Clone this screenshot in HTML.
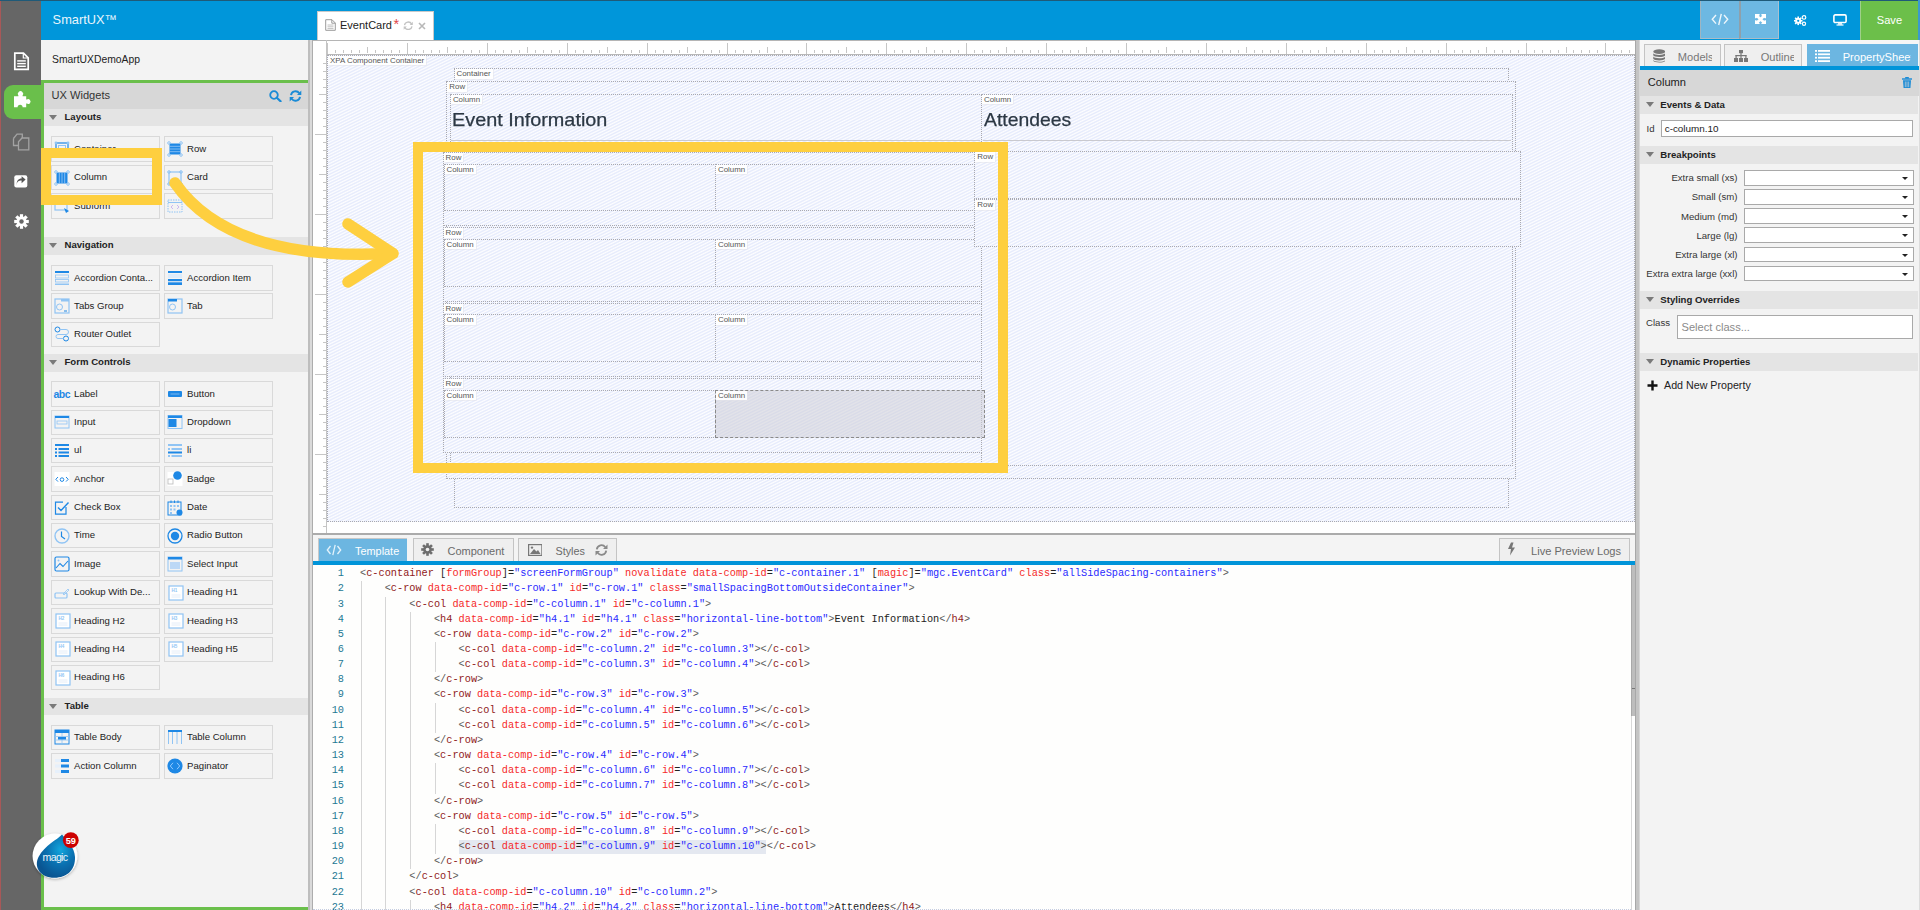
<!DOCTYPE html><html><head><meta charset="utf-8"><style>
*{margin:0;padding:0;box-sizing:border-box}
html,body{width:1920px;height:910px;overflow:hidden;background:#f3f3f3;font-family:"Liberation Sans",sans-serif;color:#333}
.a{position:absolute}
.t{position:absolute;white-space:pre;line-height:1}
.tile{position:absolute;height:25.4px;border:1px solid #d9d9d9;background:#f3f3f3}
.tile span{position:absolute;left:22.3px;top:6.4px;font-size:9.6px;color:#1c1c1c;white-space:pre;line-height:1}
.tile svg{position:absolute;left:2.3px;top:3.9px}
.sec{position:absolute;left:42px;width:266.5px;height:17.5px;background:#e4e4e4}
.sec b{position:absolute;left:22.5px;top:3.4px;font-size:9.6px;color:#222;line-height:1;white-space:pre}
.tri{position:absolute;left:7.2px;top:6px;width:0;height:0;border-left:4px solid transparent;border-right:4px solid transparent;border-top:5.7px solid #7a7a7a}
.psec{position:absolute;left:1640px;width:278px;height:17.5px;background:#e4e4e4}
.psec b{position:absolute;left:20.3px;top:4.2px;font-size:9.6px;color:#222;line-height:1;white-space:pre}
.psec .tri{left:6px}
.lbl{position:absolute;font-size:7.9px;color:#555;background:rgba(255,255,255,.92);padding:1px 2px 0.5px 2px;box-shadow:0.5px 0.5px 0 #e2e2e8;line-height:1;white-space:pre}
.dot{position:absolute;border:1px dotted #a0a0a0}
.code{position:absolute;left:360px;font-family:"Liberation Mono",monospace;font-size:10.27px;white-space:pre;line-height:15.16px;color:#000}
.ln{position:absolute;left:304px;width:40px;text-align:right;font-family:"Liberation Mono",monospace;font-size:10.27px;line-height:15.16px;color:#237893}
.g{position:absolute;width:1px;background:#d6d6d6}
.p{color:#5a5a5a}.tg{color:#902020}.at{color:#f52a2a}.v{color:#2a2aff}.k{color:#222}
.sel{position:absolute;left:1743.5px;width:170px;height:15.5px;background:#fff;border:1px solid #a9a9a9}
.sel:after{content:"";position:absolute;right:5px;top:6px;border-left:3px solid transparent;border-right:3px solid transparent;border-top:3px solid #222}
.blab{position:absolute;font-size:9.6px;color:#333;line-height:1;white-space:pre;text-align:right;width:120px;left:1617.5px}
.tab{position:absolute;background:#efefef;border:1px solid #c4c4c4;border-bottom:none}
.hatch{background-color:#fff;background-image:repeating-linear-gradient(154deg,#fdfdff 0px,#e7ecfc 1.1px,#e7ecfc 1.5px,#fdfdff 2.6px,#fdfdff 2.75px);background-attachment:fixed}
</style></head><body>
<div class="a" style="left:0px;top:0px;width:40.5px;height:910px;background:#666"></div>
<div class="a" style="left:0px;top:0px;width:1px;height:910px;background:#a85858"></div>
<svg class="a" style="left:13px;top:52px" width="17" height="19" viewBox="0 0 17 19">
<path d="M1.8 1.2 H10.5 L15.2 5.8 V17.3 H1.8 Z" fill="none" stroke="#fff" stroke-width="1.7"/>
<path d="M10.3 1.5 V6 H15" fill="none" stroke="#fff" stroke-width="1.2"/>
<rect x="4.2" y="8.2" width="8.6" height="1.4" fill="#fff"/><rect x="4.2" y="10.9" width="8.6" height="1.4" fill="#fff"/><rect x="4.2" y="13.6" width="8.6" height="1.4" fill="#fff"/>
</svg>
<div class="a" style="left:3.8px;top:84.7px;width:38px;height:34.3px;background:#6abf4b;border-radius:9px 0 0 9px"></div>
<svg class="a" style="left:13px;top:90px" width="20" height="19" viewBox="0 0 20 19">
<path d="M1 6.2 H5.4 V5.6 A2.7 2.7 0 1 1 9.6 5.6 V6.2 H13.2 V9.6 H13.8 A2.4 2.4 0 1 1 13.8 13.6 H13.2 V17.2 H9.6 A2.5 2.5 0 1 0 4.6 17.2 H1 Z" fill="#fff"/>
</svg>
<svg class="a" style="left:11.5px;top:132.5px" width="19" height="18" viewBox="0 0 19 18">
<path d="M1.5 5.5 L5 1.2 H10.3 V5 M1.5 5.5 V12.5 H6" fill="none" stroke="#a3a3a3" stroke-width="1.3"/>
<path d="M6.5 8.7 L10 5 H16.8 V16.8 H6.5 Z" fill="none" stroke="#a3a3a3" stroke-width="1.3"/>
</svg>
<svg class="a" style="left:13.8px;top:174.8px" width="14" height="13" viewBox="0 0 14 13">
<rect x="0.3" y="0.3" width="13" height="12.2" rx="2" fill="#fff"/>
<path d="M2.6 10.8 C2.6 6.6 4.8 5.6 7.6 5.6 V8.2 L11.6 4.6 L7.6 1.2 V3.4 C4.4 3.4 2.3 5.8 2.6 10.8 Z" fill="#555"/>
</svg>
<svg class="a" style="left:13.5px;top:213.8px" width="15" height="15" viewBox="-7.5 -7.5 15 15">
<g fill="#fff"><circle r="5"/><rect x="-1.6" y="-7.3" width="3.2" height="3.4" transform="rotate(0)"/><rect x="-1.6" y="-7.3" width="3.2" height="3.4" transform="rotate(45)"/><rect x="-1.6" y="-7.3" width="3.2" height="3.4" transform="rotate(90)"/><rect x="-1.6" y="-7.3" width="3.2" height="3.4" transform="rotate(135)"/><rect x="-1.6" y="-7.3" width="3.2" height="3.4" transform="rotate(180)"/><rect x="-1.6" y="-7.3" width="3.2" height="3.4" transform="rotate(225)"/><rect x="-1.6" y="-7.3" width="3.2" height="3.4" transform="rotate(270)"/><rect x="-1.6" y="-7.3" width="3.2" height="3.4" transform="rotate(315)"/></g><circle r="2.2" fill="#666"/>
</svg>
<div class="a" style="left:40.5px;top:0px;width:1879.5px;height:40px;background:#0096da"></div>
<div class="a" style="left:0px;top:0px;width:1920px;height:1px;background:#1f5a78"></div>
<div class="t" style="left:52.6px;top:14.00px;font-size:12.8px;color:#e9f5fc">SmartUX™</div>
<div class="a" style="left:317px;top:11.4px;width:116.6px;height:28.6px;background:#fff;border:1px solid #c9c9c9;border-bottom:none"></div>
<svg class="a" style="left:325px;top:19px" width="11" height="12" viewBox="0 0 11 12">
<path d="M0.7 0.7 H7 L10.3 4 V11.3 H0.7 Z M6.8 0.8 V4.2 H10.2" fill="none" stroke="#9a9a9a" stroke-width="1"/>
<path d="M2.5 6 H8.5 M2.5 7.8 H8.5 M2.5 9.6 H8.5" stroke="#b0b0b0" stroke-width="0.8"/>
</svg>
<div class="t" style="left:340px;top:20.00px;font-size:11px;color:#222">EventCard</div>
<div class="t" style="left:393.4px;top:17.00px;font-size:14.5px;color:#e04848">*</div>
<svg class="a" style="left:402.5px;top:20.5px" width="10.5" height="9.5" viewBox="0 0 10.5 9.5">
<path d="M1.5 4.2 A3.8 3.8 0 0 1 8.6 3 M9 5.3 A3.8 3.8 0 0 1 1.9 6.5" fill="none" stroke="#c2c2c2" stroke-width="1.3"/>
<path d="M9.8 0.8 V3.9 H6.7 Z M0.7 8.7 V5.6 H3.8 Z" fill="#c2c2c2"/>
</svg>
<svg class="a" style="left:417.5px;top:21.5px" width="8" height="8" viewBox="0 0 8 8">
<path d="M1 1 L7 7 M7 1 L1 7" stroke="#b8b8b8" stroke-width="1.6"/></svg>
<div class="a" style="left:1699.8px;top:1px;width:39.2px;height:38px;background:#6db8e2;border-left:1px solid #9fb5c2;border-bottom:1px solid #a8bcc8"></div>
<div class="a" style="left:1739px;top:1px;width:40.2px;height:38px;background:#6db8e2;border-left:2px solid #8fa0aa;border-right:1px solid #a8c0d0;border-bottom:1px solid #a8bcc8"></div>
<svg class="a" style="left:1711px;top:13px" width="18" height="13" viewBox="0 0 18 13">
<path d="M5 2 L1.3 6.3 L5 10.6 M13 2 L16.7 6.3 L13 10.6 M10.3 0.8 L7.7 12" fill="none" stroke="#eef7fc" stroke-width="1.4"/></svg>
<svg class="a" style="left:1754.5px;top:13.8px" width="11" height="10.5" viewBox="0 0 11 10.5">
<path d="M2 2 L9 8.5 M9 2 L2 8.5" stroke="#fff" stroke-width="2.8"/>
<g fill="#fff"><path d="M0 0 H4.6 L4.6 1.2 L1.2 4.3 H0 Z"/><path d="M11 0 V4.3 H9.8 L6.4 1.2 V0 Z"/><path d="M0 10.5 V6.2 H1.2 L4.6 9.3 V10.5 Z"/><path d="M11 10.5 H6.4 V9.3 L9.8 6.2 H11 Z"/></g></svg>
<svg class="a" style="left:1793.5px;top:14.5px" width="13" height="11" viewBox="0 0 13 11">
<g fill="#fff"><circle cx="4.2" cy="5.8" r="3"/><rect x="3.4" y="1.5" width="1.6" height="2" transform="rotate(0 4.2 5.8)"/><rect x="3.4" y="1.5" width="1.6" height="2" transform="rotate(45 4.2 5.8)"/><rect x="3.4" y="1.5" width="1.6" height="2" transform="rotate(90 4.2 5.8)"/><rect x="3.4" y="1.5" width="1.6" height="2" transform="rotate(135 4.2 5.8)"/><rect x="3.4" y="1.5" width="1.6" height="2" transform="rotate(180 4.2 5.8)"/><rect x="3.4" y="1.5" width="1.6" height="2" transform="rotate(225 4.2 5.8)"/><rect x="3.4" y="1.5" width="1.6" height="2" transform="rotate(270 4.2 5.8)"/><rect x="3.4" y="1.5" width="1.6" height="2" transform="rotate(315 4.2 5.8)"/></g>
<circle cx="4.2" cy="5.8" r="1.1" fill="#0096da"/>
<circle cx="10" cy="2.4" r="1.8" fill="none" stroke="#fff" stroke-width="1.2"/><circle cx="10" cy="8.8" r="1.6" fill="none" stroke="#fff" stroke-width="1.2"/>
</svg>
<svg class="a" style="left:1833px;top:14px" width="14" height="12" viewBox="0 0 14 12">
<rect x="0.9" y="0.9" width="12.2" height="7.6" rx="1.3" fill="none" stroke="#fff" stroke-width="1.6"/>
<rect x="5" y="9.2" width="4" height="1.4" fill="#fff"/><rect x="3.5" y="10.4" width="7" height="1.2" fill="#fff"/></svg>
<div class="a" style="left:1859.5px;top:1px;width:58.5px;height:38.5px;background:#6cbf4a;border-left:1px solid #9fd08a"></div>
<div class="t" style="left:1876.8px;top:15.00px;font-size:11.1px;color:#fff">Save</div>
<div class="a" style="left:1918px;top:0px;width:2px;height:40px;background:#3a9ad0"></div>
<div class="a" style="left:40.5px;top:40px;width:268px;height:870px;background:#f3f3f3"></div>
<div class="t" style="left:52px;top:55.00px;font-size:10.35px;color:#222">SmartUXDemoApp</div>
<div class="a" style="left:42px;top:82px;width:266.5px;height:26.5px;background:#d7d7d7"></div>
<div class="t" style="left:51.5px;top:90.00px;font-size:11.1px;color:#333">UX Widgets</div>
<svg class="a" style="left:268.5px;top:89.5px" width="13" height="12" viewBox="0 0 13 12">
<circle cx="5" cy="5" r="3.8" fill="none" stroke="#1a8bd6" stroke-width="1.8"/><path d="M7.8 7.8 L11.6 11.3" stroke="#1a8bd6" stroke-width="2.2" stroke-linecap="round"/></svg>
<svg class="a" style="left:288.5px;top:89.5px" width="13" height="12" viewBox="0 0 13 12">
<path d="M2 5.2 A4.6 4.6 0 0 1 10.3 3.2 M11 6.8 A4.6 4.6 0 0 1 2.7 8.8" fill="none" stroke="#1a8bd6" stroke-width="1.9"/>
<path d="M12.3 0.6 V4.9 H8 Z M0.7 11.4 V7.1 H5 Z" fill="#1a8bd6"/></svg>
<div class="sec" style="top:108.5px"><div class="tri"></div><b>Layouts</b></div>
<div class="tile" style="left:50.8px;top:136.3px;width:109.7px"><svg width="16" height="16" viewBox="0 0 16 16"><rect x="2" y="2" width="12" height="12" fill="none" stroke="#1e88e5" stroke-width="1.2"/><rect x="4.5" y="4.5" width="7" height="7" fill="none" stroke="#90c4f4" stroke-width="1"/><g fill="#90c4f4"><circle cx="2" cy="2" r="1.4"/><circle cx="14" cy="2" r="1.4"/><circle cx="2" cy="14" r="1.4"/><circle cx="14" cy="14" r="1.4"/></g></svg><span>Container</span></div>
<div class="tile" style="left:163.8px;top:136.3px;width:109.2px"><svg width="16" height="16" viewBox="0 0 16 16"><rect x="2.5" y="2.5" width="11" height="11" fill="#1e88e5"/><g stroke="#9ccaf5" stroke-width="0.8"><path d="M2.5 5.3 H13.5 M2.5 8 H13.5 M2.5 10.7 H13.5"/></g><g fill="none" stroke="#90c4f4" stroke-width="1"><circle cx="2" cy="2" r="1.3"/><circle cx="14" cy="2" r="1.3"/><circle cx="2" cy="14" r="1.3"/><circle cx="14" cy="14" r="1.3"/></g></svg><span>Row</span></div>
<div class="tile" style="left:50.8px;top:164.75px;width:109.7px"><svg width="16" height="16" viewBox="0 0 16 16"><rect x="2.5" y="2.5" width="11" height="11" fill="#1e88e5"/><g stroke="#9ccaf5" stroke-width="0.8"><path d="M5.3 2.5 V13.5 M8 2.5 V13.5 M10.7 2.5 V13.5"/></g><g fill="none" stroke="#90c4f4" stroke-width="1"><circle cx="2" cy="2" r="1.3"/><circle cx="14" cy="2" r="1.3"/><circle cx="2" cy="14" r="1.3"/><circle cx="14" cy="14" r="1.3"/></g></svg><span>Column</span></div>
<div class="tile" style="left:163.8px;top:164.75px;width:109.2px"><svg width="16" height="16" viewBox="0 0 16 16"><rect x="2" y="2" width="12" height="12" fill="none" stroke="#90c4f4" stroke-width="1.2"/><rect x="5" y="8" width="6" height="3" fill="#90c4f4"/><g fill="none" stroke="#90c4f4" stroke-width="1"><circle cx="2" cy="2" r="1.3"/><circle cx="14" cy="2" r="1.3"/><circle cx="2" cy="14" r="1.3"/><circle cx="14" cy="14" r="1.3"/></g></svg><span>Card</span></div>
<div class="tile" style="left:50.8px;top:193.2px;width:109.7px"><svg width="16" height="16" viewBox="0 0 16 16"><rect x="1" y="3" width="12" height="9" fill="none" stroke="#90c4f4" stroke-width="1.2"/><path d="M1 5.5 H13" stroke="#90c4f4"/><path d="M10 10 L15 13 L12 15 Z" fill="#1e88e5"/></svg><span>Subform</span></div>
<div class="tile" style="left:163.8px;top:193.2px;width:109.2px"><svg width="16" height="16" viewBox="0 0 16 16"><rect x="1" y="2" width="14" height="12" fill="none" stroke="#90c4f4" stroke-width="1" stroke-dasharray="1.5 1"/><path d="M1 4.5 H15" stroke="#90c4f4"/><path d="M6 7 L4 9 L6 11 M10 7 L12 9 L10 11" fill="none" stroke="#c0a8f0" stroke-width="0.8"/></svg></div>
<div class="sec" style="top:237px"><div class="tri"></div><b>Navigation</b></div>
<div class="tile" style="left:50.8px;top:265.2px;width:109.7px"><svg width="16" height="16" viewBox="0 0 16 16"><rect x="1" y="1" width="14" height="2" fill="#1e88e5"/><rect x="1.5" y="5" width="13" height="3" fill="none" stroke="#90c4f4" stroke-width="0.8"/><rect x="1.5" y="9.5" width="13" height="2.5" fill="none" stroke="#90c4f4" stroke-width="0.8"/><rect x="1" y="13.5" width="14" height="1.5" fill="#90c4f4"/></svg><span>Accordion Conta...</span></div>
<div class="tile" style="left:163.8px;top:265.2px;width:109.2px"><svg width="16" height="16" viewBox="0 0 16 16"><rect x="1" y="1" width="14" height="2" fill="#1e88e5"/><rect x="1" y="4" width="14" height="4" fill="#dcebfb"/><rect x="1" y="9" width="14" height="2.2" fill="#1e88e5"/><rect x="1" y="12.3" width="14" height="2.7" fill="#1e88e5"/></svg><span>Accordion Item</span></div>
<div class="tile" style="left:50.8px;top:293.4px;width:109.7px"><svg width="16" height="16" viewBox="0 0 16 16"><rect x="1" y="1" width="14" height="14" fill="none" stroke="#90c4f4" stroke-width="1.2"/><rect x="7" y="1" width="8" height="2.5" fill="#90c4f4"/><circle cx="5.5" cy="9" r="3" fill="none" stroke="#90c4f4"/><path d="M10 13 H13" stroke="#1e88e5"/></svg><span>Tabs Group</span></div>
<div class="tile" style="left:163.8px;top:293.4px;width:109.2px"><svg width="16" height="16" viewBox="0 0 16 16"><rect x="1" y="1" width="14" height="14" fill="none" stroke="#90c4f4" stroke-width="1.2"/><rect x="1" y="1" width="9" height="2.5" fill="#1e88e5"/><circle cx="5.5" cy="9" r="3" fill="none" stroke="#90c4f4"/></svg><span>Tab</span></div>
<div class="tile" style="left:50.8px;top:321.6px;width:109.7px"><svg width="16" height="16" viewBox="0 0 16 16"><circle cx="3.5" cy="3.5" r="2.5" fill="none" stroke="#1e88e5" stroke-width="1"/><circle cx="12" cy="12.5" r="2.5" fill="none" stroke="#1e88e5" stroke-width="1"/><path d="M6 3.5 H12 A2.5 2.5 0 0 1 12 8.5 H4 A2 2 0 0 0 4 12.5 H9.5" fill="none" stroke="#90c4f4" stroke-width="1"/></svg><span>Router Outlet</span></div>
<div class="sec" style="top:354px"><div class="tri"></div><b>Form Controls</b></div>
<div class="tile" style="left:50.8px;top:381.2px;width:109.7px"><div style="position:absolute;left:1.6px;top:6.6px;font:bold 10.5px 'Liberation Sans';color:#1e88e5;letter-spacing:-0.4px;line-height:1">abc</div><span>Label</span></div>
<div class="tile" style="left:163.8px;top:381.2px;width:109.2px"><svg width="16" height="16" viewBox="0 0 16 16"><rect x="1" y="5" width="14" height="6" rx="1" fill="#1e88e5"/><path d="M3.5 8 H12.5" stroke="#8fc3f2" stroke-width="0.8"/></svg><span>Button</span></div>
<div class="tile" style="left:50.8px;top:409.58px;width:109.7px"><svg width="16" height="16" viewBox="0 0 16 16"><rect x="1" y="2" width="14" height="12" fill="none" stroke="#90c4f4" stroke-width="1"/><rect x="1" y="2" width="14" height="2" fill="#1e88e5"/><rect x="3" y="7" width="10" height="3" fill="none" stroke="#90c4f4" stroke-width="0.8"/></svg><span>Input</span></div>
<div class="tile" style="left:163.8px;top:409.58px;width:109.2px"><svg width="16" height="16" viewBox="0 0 16 16"><rect x="1" y="1.5" width="14" height="13" fill="none" stroke="#90c4f4" stroke-width="1"/><rect x="1" y="1.5" width="14" height="2.5" fill="#1e88e5"/><rect x="1.5" y="5" width="8" height="8" fill="#1e88e5"/></svg><span>Dropdown</span></div>
<div class="tile" style="left:50.8px;top:437.96px;width:109.7px"><svg width="16" height="16" viewBox="0 0 16 16"><rect x="1" y="1" width="14" height="2" fill="#1e88e5"/><g fill="#1e88e5"><rect x="1" y="5" width="2" height="2"/><rect x="1" y="8.5" width="2" height="2"/><rect x="1" y="12" width="2" height="2"/><rect x="4.5" y="5" width="10.5" height="2"/><rect x="4.5" y="8.5" width="10.5" height="2"/><rect x="4.5" y="12" width="10.5" height="2"/></g></svg><span>ul</span></div>
<div class="tile" style="left:163.8px;top:437.96px;width:109.2px"><svg width="16" height="16" viewBox="0 0 16 16"><rect x="1" y="1" width="14" height="2" fill="#90c4f4"/><g fill="#90c4f4"><rect x="1" y="5" width="2" height="2"/><rect x="1" y="12" width="2" height="2"/><rect x="4.5" y="5" width="10.5" height="2"/><rect x="4.5" y="12" width="10.5" height="2"/></g><rect x="1" y="8.5" width="14" height="2" fill="#1e88e5"/></svg><span>li</span></div>
<div class="tile" style="left:50.8px;top:466.34px;width:109.7px"><svg width="16" height="16" viewBox="0 0 16 16"><rect x="0.5" y="1" width="15" height="14" fill="#fff"/><path d="M4 6 L1.8 8.3 L4 10.6 M12 6 L14.2 8.3 L12 10.6" fill="none" stroke="#1e88e5" stroke-width="1"/><circle cx="8" cy="8.6" r="1.8" fill="none" stroke="#1e88e5" stroke-width="1"/></svg><span>Anchor</span></div>
<div class="tile" style="left:163.8px;top:466.34px;width:109.2px"><svg width="16" height="16" viewBox="0 0 16 16"><rect x="0.5" y="1" width="15" height="14" fill="#fff"/><rect x="1" y="8" width="5" height="5" fill="none" stroke="#bbb" stroke-width="0.8"/><circle cx="10.5" cy="4.5" r="4.3" fill="#1e88e5"/></svg><span>Badge</span></div>
<div class="tile" style="left:50.8px;top:494.72px;width:109.7px"><svg width="16" height="16" viewBox="0 0 16 16"><path d="M12 7 V14.2 H1.5 V2.2 H9" fill="none" stroke="#1e88e5" stroke-width="1.2"/><path d="M4 7.5 L7 10.5 L14.5 2.5" fill="none" stroke="#1e88e5" stroke-width="1.4"/></svg><span>Check Box</span></div>
<div class="tile" style="left:163.8px;top:494.72px;width:109.2px"><svg width="16" height="16" viewBox="0 0 16 16"><rect x="1" y="2" width="13" height="13" fill="none" stroke="#1e88e5" stroke-width="1"/><g fill="#90c4f4"><rect x="3" y="5" width="2" height="2"/><rect x="6.5" y="5" width="2" height="2"/><rect x="10" y="5" width="2" height="2"/><rect x="3" y="8.5" width="2" height="2"/><rect x="6.5" y="8.5" width="2" height="2"/><rect x="3" y="12" width="2" height="2"/></g><circle cx="12.5" cy="12.5" r="3" fill="#1e88e5"/><g stroke="#1e88e5"><path d="M4 0.5 V3 M7.5 0.5 V3 M11 0.5 V3"/></g></svg><span>Date</span></div>
<div class="tile" style="left:50.8px;top:523.1px;width:109.7px"><svg width="16" height="16" viewBox="0 0 16 16"><circle cx="8" cy="8" r="7" fill="none" stroke="#90c4f4" stroke-width="1.4"/><path d="M7.5 3.5 V8.5 L11 11" fill="none" stroke="#1e88e5" stroke-width="1.2"/></svg><span>Time</span></div>
<div class="tile" style="left:163.8px;top:523.1px;width:109.2px"><svg width="16" height="16" viewBox="0 0 16 16"><circle cx="8" cy="8" r="7" fill="none" stroke="#1e88e5" stroke-width="1.3"/><circle cx="8" cy="8" r="4.2" fill="#1e88e5"/></svg><span>Radio Button</span></div>
<div class="tile" style="left:50.8px;top:551.48px;width:109.7px"><svg width="16" height="16" viewBox="0 0 16 16"><rect x="1" y="1" width="14" height="14" rx="1.5" fill="none" stroke="#1e88e5" stroke-width="1.2"/><path d="M2 12 L6 7.5 L9 10.5 L14 5" fill="none" stroke="#1e88e5" stroke-width="1.1"/><circle cx="4.5" cy="4.5" r="1" fill="#90c4f4"/></svg><span>Image</span></div>
<div class="tile" style="left:163.8px;top:551.48px;width:109.2px"><svg width="16" height="16" viewBox="0 0 16 16"><rect x="1" y="1" width="14" height="14" fill="none" stroke="#90c4f4" stroke-width="1"/><rect x="1" y="1" width="14" height="2.5" fill="#1e88e5"/><rect x="3" y="6" width="10" height="7" fill="#bcd8f6"/></svg><span>Select Input</span></div>
<div class="tile" style="left:50.8px;top:579.86px;width:109.7px"><svg width="16" height="16" viewBox="0 0 16 16"><rect x="1" y="8" width="12" height="5" rx="1" fill="none" stroke="#90c4f4" stroke-width="1.2"/><path d="M9 9 L14 4 L15 5 L10 10 Z" fill="none" stroke="#90c4f4" stroke-width="0.8"/></svg><span>Lookup With De...</span></div>
<div class="tile" style="left:163.8px;top:579.86px;width:109.2px"><svg width="16" height="16" viewBox="0 0 16 16" style="position:absolute;left:3px;top:3.7px"><rect x="1" y="1" width="14" height="14" fill="#fff" stroke="#90c4f4" stroke-width="1.2"/><text x="3.5" y="7" font-size="4.5" font-family="Liberation Sans" font-weight="bold" fill="#90c4f4">H1</text><path d="M3.5 10 H12.5 M3.5 12 H12.5" stroke="#dde9f6" stroke-width="0.8"/></svg><span>Heading H1</span></div>
<div class="tile" style="left:50.8px;top:608.24px;width:109.7px"><svg width="16" height="16" viewBox="0 0 16 16" style="position:absolute;left:3px;top:3.7px"><rect x="1" y="1" width="14" height="14" fill="#fff" stroke="#90c4f4" stroke-width="1.2"/><text x="3.5" y="7" font-size="4.5" font-family="Liberation Sans" font-weight="bold" fill="#90c4f4">H2</text><path d="M3.5 10 H12.5 M3.5 12 H12.5" stroke="#dde9f6" stroke-width="0.8"/></svg><span>Heading H2</span></div>
<div class="tile" style="left:163.8px;top:608.24px;width:109.2px"><svg width="16" height="16" viewBox="0 0 16 16" style="position:absolute;left:3px;top:3.7px"><rect x="1" y="1" width="14" height="14" fill="#fff" stroke="#90c4f4" stroke-width="1.2"/><text x="3.5" y="7" font-size="4.5" font-family="Liberation Sans" font-weight="bold" fill="#90c4f4">H3</text><path d="M3.5 10 H12.5 M3.5 12 H12.5" stroke="#dde9f6" stroke-width="0.8"/></svg><span>Heading H3</span></div>
<div class="tile" style="left:50.8px;top:636.62px;width:109.7px"><svg width="16" height="16" viewBox="0 0 16 16" style="position:absolute;left:3px;top:3.7px"><rect x="1" y="1" width="14" height="14" fill="#fff" stroke="#90c4f4" stroke-width="1.2"/><text x="3.5" y="7" font-size="4.5" font-family="Liberation Sans" font-weight="bold" fill="#90c4f4">H4</text><path d="M3.5 10 H12.5 M3.5 12 H12.5" stroke="#dde9f6" stroke-width="0.8"/></svg><span>Heading H4</span></div>
<div class="tile" style="left:163.8px;top:636.62px;width:109.2px"><svg width="16" height="16" viewBox="0 0 16 16" style="position:absolute;left:3px;top:3.7px"><rect x="1" y="1" width="14" height="14" fill="#fff" stroke="#90c4f4" stroke-width="1.2"/><text x="3.5" y="7" font-size="4.5" font-family="Liberation Sans" font-weight="bold" fill="#90c4f4">H5</text><path d="M3.5 10 H12.5 M3.5 12 H12.5" stroke="#dde9f6" stroke-width="0.8"/></svg><span>Heading H5</span></div>
<div class="tile" style="left:50.8px;top:665.0px;width:109.7px"><svg width="16" height="16" viewBox="0 0 16 16" style="position:absolute;left:3px;top:3.7px"><rect x="1" y="1" width="14" height="14" fill="#fff" stroke="#90c4f4" stroke-width="1.2"/><text x="3.5" y="7" font-size="4.5" font-family="Liberation Sans" font-weight="bold" fill="#90c4f4">H6</text><path d="M3.5 10 H12.5 M3.5 12 H12.5" stroke="#dde9f6" stroke-width="0.8"/></svg><span>Heading H6</span></div>
<div class="sec" style="top:697.7px"><div class="tri"></div><b>Table</b></div>
<div class="tile" style="left:50.8px;top:724.6px;width:109.7px"><svg width="16" height="16" viewBox="0 0 16 16"><rect x="1" y="1" width="14" height="14" fill="none" stroke="#1e88e5" stroke-width="1"/><rect x="1" y="1" width="14" height="3" fill="#1e88e5"/><path d="M1 7.5 H15 M1 11 H15 M8 4 V15" stroke="#90c4f4" stroke-width="0.8"/><rect x="4" y="8" width="8" height="2.5" fill="#1e88e5"/></svg><span>Table Body</span></div>
<div class="tile" style="left:163.8px;top:724.6px;width:109.2px"><svg width="16" height="16" viewBox="0 0 16 16"><rect x="1" y="1" width="14" height="2" fill="#1e88e5"/><path d="M1.5 3 V15 M5.5 3 V15 M10 3 V15 M14.5 3 V15" stroke="#90c4f4" stroke-width="1"/></svg><span>Table Column</span></div>
<div class="tile" style="left:50.8px;top:753.2px;width:109.7px"><svg width="16" height="16" viewBox="0 0 16 16"><g fill="#1e88e5"><rect x="7" y="1" width="8" height="3"/><rect x="7" y="6.5" width="8" height="3"/><rect x="7" y="12" width="8" height="3"/></g><g fill="#e6f0fb"><rect x="1" y="1" width="6" height="3"/><rect x="1" y="6.5" width="6" height="3"/><rect x="1" y="12" width="6" height="3"/></g></svg><span>Action Column</span></div>
<div class="tile" style="left:163.8px;top:753.2px;width:109.2px"><svg width="16" height="16" viewBox="0 0 16 16"><circle cx="8" cy="8" r="7.6" fill="#1e88e5"/><path d="M6 4.8 L3.3 8 L6 11.2 M10 4.8 L12.7 8 L10 11.2" fill="none" stroke="#9fd0ff" stroke-width="0.9"/></svg><span>Paginator</span></div>
<div class="a" style="left:40.5px;top:80px;width:268px;height:3px;background:#6abf4b"></div>
<div class="a" style="left:40.5px;top:80px;width:3px;height:830px;background:#6abf4b"></div>
<div class="a" style="left:40.5px;top:907px;width:268px;height:3px;background:#6abf4b"></div>
<div class="a" style="left:308.2px;top:40px;width:2px;height:870px;background:#bdbdbd"></div>
<div class="a" style="left:310.2px;top:40px;width:2px;height:870px;background:#dadada"></div>
<div class="a" style="left:312.2px;top:40px;width:1px;height:870px;background:#adadad"></div>
<div class="a" style="left:313.2px;top:40px;width:1321.6px;height:495px;background:#fff"></div>
<div class="a" style="left:313.2px;top:40px;width:1321.6px;height:1px;background:#b5b5b5"></div>
<div class="a" style="left:327px;top:53.5px;width:1307.5px;height:1px;background:#b8b8b8"></div>
<div class="a" style="left:326px;top:40px;width:1px;height:493px;background:#c4c4c4"></div>
<div class="a" style="left:327.0px;top:42.5px;width:1px;height:11px;background:#c6c6c6"></div><div class="a" style="left:335.0px;top:50.2px;width:1px;height:3.3px;background:#c6c6c6"></div><div class="a" style="left:343.0px;top:50.2px;width:1px;height:3.3px;background:#c6c6c6"></div><div class="a" style="left:351.0px;top:50.2px;width:1px;height:3.3px;background:#c6c6c6"></div><div class="a" style="left:359.0px;top:50.2px;width:1px;height:3.3px;background:#c6c6c6"></div><div class="a" style="left:367.0px;top:46.9px;width:1px;height:6.6px;background:#c6c6c6"></div><div class="a" style="left:374.9px;top:50.2px;width:1px;height:3.3px;background:#c6c6c6"></div><div class="a" style="left:382.9px;top:50.2px;width:1px;height:3.3px;background:#c6c6c6"></div><div class="a" style="left:390.9px;top:50.2px;width:1px;height:3.3px;background:#c6c6c6"></div><div class="a" style="left:398.9px;top:50.2px;width:1px;height:3.3px;background:#c6c6c6"></div><div class="a" style="left:406.9px;top:42.5px;width:1px;height:11px;background:#c6c6c6"></div><div class="a" style="left:414.9px;top:50.2px;width:1px;height:3.3px;background:#c6c6c6"></div><div class="a" style="left:422.9px;top:50.2px;width:1px;height:3.3px;background:#c6c6c6"></div><div class="a" style="left:430.9px;top:50.2px;width:1px;height:3.3px;background:#c6c6c6"></div><div class="a" style="left:438.9px;top:50.2px;width:1px;height:3.3px;background:#c6c6c6"></div><div class="a" style="left:446.9px;top:46.9px;width:1px;height:6.6px;background:#c6c6c6"></div><div class="a" style="left:454.8px;top:50.2px;width:1px;height:3.3px;background:#c6c6c6"></div><div class="a" style="left:462.8px;top:50.2px;width:1px;height:3.3px;background:#c6c6c6"></div><div class="a" style="left:470.8px;top:50.2px;width:1px;height:3.3px;background:#c6c6c6"></div><div class="a" style="left:478.8px;top:50.2px;width:1px;height:3.3px;background:#c6c6c6"></div><div class="a" style="left:486.8px;top:42.5px;width:1px;height:11px;background:#c6c6c6"></div><div class="a" style="left:494.8px;top:50.2px;width:1px;height:3.3px;background:#c6c6c6"></div><div class="a" style="left:502.8px;top:50.2px;width:1px;height:3.3px;background:#c6c6c6"></div><div class="a" style="left:510.8px;top:50.2px;width:1px;height:3.3px;background:#c6c6c6"></div><div class="a" style="left:518.8px;top:50.2px;width:1px;height:3.3px;background:#c6c6c6"></div><div class="a" style="left:526.8px;top:46.9px;width:1px;height:6.6px;background:#c6c6c6"></div><div class="a" style="left:534.7px;top:50.2px;width:1px;height:3.3px;background:#c6c6c6"></div><div class="a" style="left:542.7px;top:50.2px;width:1px;height:3.3px;background:#c6c6c6"></div><div class="a" style="left:550.7px;top:50.2px;width:1px;height:3.3px;background:#c6c6c6"></div><div class="a" style="left:558.7px;top:50.2px;width:1px;height:3.3px;background:#c6c6c6"></div><div class="a" style="left:566.7px;top:42.5px;width:1px;height:11px;background:#c6c6c6"></div><div class="a" style="left:574.7px;top:50.2px;width:1px;height:3.3px;background:#c6c6c6"></div><div class="a" style="left:582.7px;top:50.2px;width:1px;height:3.3px;background:#c6c6c6"></div><div class="a" style="left:590.7px;top:50.2px;width:1px;height:3.3px;background:#c6c6c6"></div><div class="a" style="left:598.7px;top:50.2px;width:1px;height:3.3px;background:#c6c6c6"></div><div class="a" style="left:606.7px;top:46.9px;width:1px;height:6.6px;background:#c6c6c6"></div><div class="a" style="left:614.6px;top:50.2px;width:1px;height:3.3px;background:#c6c6c6"></div><div class="a" style="left:622.6px;top:50.2px;width:1px;height:3.3px;background:#c6c6c6"></div><div class="a" style="left:630.6px;top:50.2px;width:1px;height:3.3px;background:#c6c6c6"></div><div class="a" style="left:638.6px;top:50.2px;width:1px;height:3.3px;background:#c6c6c6"></div><div class="a" style="left:646.6px;top:42.5px;width:1px;height:11px;background:#c6c6c6"></div><div class="a" style="left:654.6px;top:50.2px;width:1px;height:3.3px;background:#c6c6c6"></div><div class="a" style="left:662.6px;top:50.2px;width:1px;height:3.3px;background:#c6c6c6"></div><div class="a" style="left:670.6px;top:50.2px;width:1px;height:3.3px;background:#c6c6c6"></div><div class="a" style="left:678.6px;top:50.2px;width:1px;height:3.3px;background:#c6c6c6"></div><div class="a" style="left:686.6px;top:46.9px;width:1px;height:6.6px;background:#c6c6c6"></div><div class="a" style="left:694.5px;top:50.2px;width:1px;height:3.3px;background:#c6c6c6"></div><div class="a" style="left:702.5px;top:50.2px;width:1px;height:3.3px;background:#c6c6c6"></div><div class="a" style="left:710.5px;top:50.2px;width:1px;height:3.3px;background:#c6c6c6"></div><div class="a" style="left:718.5px;top:50.2px;width:1px;height:3.3px;background:#c6c6c6"></div><div class="a" style="left:726.5px;top:42.5px;width:1px;height:11px;background:#c6c6c6"></div><div class="a" style="left:734.5px;top:50.2px;width:1px;height:3.3px;background:#c6c6c6"></div><div class="a" style="left:742.5px;top:50.2px;width:1px;height:3.3px;background:#c6c6c6"></div><div class="a" style="left:750.5px;top:50.2px;width:1px;height:3.3px;background:#c6c6c6"></div><div class="a" style="left:758.5px;top:50.2px;width:1px;height:3.3px;background:#c6c6c6"></div><div class="a" style="left:766.5px;top:46.9px;width:1px;height:6.6px;background:#c6c6c6"></div><div class="a" style="left:774.4px;top:50.2px;width:1px;height:3.3px;background:#c6c6c6"></div><div class="a" style="left:782.4px;top:50.2px;width:1px;height:3.3px;background:#c6c6c6"></div><div class="a" style="left:790.4px;top:50.2px;width:1px;height:3.3px;background:#c6c6c6"></div><div class="a" style="left:798.4px;top:50.2px;width:1px;height:3.3px;background:#c6c6c6"></div><div class="a" style="left:806.4px;top:42.5px;width:1px;height:11px;background:#c6c6c6"></div><div class="a" style="left:814.4px;top:50.2px;width:1px;height:3.3px;background:#c6c6c6"></div><div class="a" style="left:822.4px;top:50.2px;width:1px;height:3.3px;background:#c6c6c6"></div><div class="a" style="left:830.4px;top:50.2px;width:1px;height:3.3px;background:#c6c6c6"></div><div class="a" style="left:838.4px;top:50.2px;width:1px;height:3.3px;background:#c6c6c6"></div><div class="a" style="left:846.4px;top:46.9px;width:1px;height:6.6px;background:#c6c6c6"></div><div class="a" style="left:854.3px;top:50.2px;width:1px;height:3.3px;background:#c6c6c6"></div><div class="a" style="left:862.3px;top:50.2px;width:1px;height:3.3px;background:#c6c6c6"></div><div class="a" style="left:870.3px;top:50.2px;width:1px;height:3.3px;background:#c6c6c6"></div><div class="a" style="left:878.3px;top:50.2px;width:1px;height:3.3px;background:#c6c6c6"></div><div class="a" style="left:886.3px;top:42.5px;width:1px;height:11px;background:#c6c6c6"></div><div class="a" style="left:894.3px;top:50.2px;width:1px;height:3.3px;background:#c6c6c6"></div><div class="a" style="left:902.3px;top:50.2px;width:1px;height:3.3px;background:#c6c6c6"></div><div class="a" style="left:910.3px;top:50.2px;width:1px;height:3.3px;background:#c6c6c6"></div><div class="a" style="left:918.3px;top:50.2px;width:1px;height:3.3px;background:#c6c6c6"></div><div class="a" style="left:926.3px;top:46.9px;width:1px;height:6.6px;background:#c6c6c6"></div><div class="a" style="left:934.2px;top:50.2px;width:1px;height:3.3px;background:#c6c6c6"></div><div class="a" style="left:942.2px;top:50.2px;width:1px;height:3.3px;background:#c6c6c6"></div><div class="a" style="left:950.2px;top:50.2px;width:1px;height:3.3px;background:#c6c6c6"></div><div class="a" style="left:958.2px;top:50.2px;width:1px;height:3.3px;background:#c6c6c6"></div><div class="a" style="left:966.2px;top:42.5px;width:1px;height:11px;background:#c6c6c6"></div><div class="a" style="left:974.2px;top:50.2px;width:1px;height:3.3px;background:#c6c6c6"></div><div class="a" style="left:982.2px;top:50.2px;width:1px;height:3.3px;background:#c6c6c6"></div><div class="a" style="left:990.2px;top:50.2px;width:1px;height:3.3px;background:#c6c6c6"></div><div class="a" style="left:998.2px;top:50.2px;width:1px;height:3.3px;background:#c6c6c6"></div><div class="a" style="left:1006.2px;top:46.9px;width:1px;height:6.6px;background:#c6c6c6"></div><div class="a" style="left:1014.1px;top:50.2px;width:1px;height:3.3px;background:#c6c6c6"></div><div class="a" style="left:1022.1px;top:50.2px;width:1px;height:3.3px;background:#c6c6c6"></div><div class="a" style="left:1030.1px;top:50.2px;width:1px;height:3.3px;background:#c6c6c6"></div><div class="a" style="left:1038.1px;top:50.2px;width:1px;height:3.3px;background:#c6c6c6"></div><div class="a" style="left:1046.1px;top:42.5px;width:1px;height:11px;background:#c6c6c6"></div><div class="a" style="left:1054.1px;top:50.2px;width:1px;height:3.3px;background:#c6c6c6"></div><div class="a" style="left:1062.1px;top:50.2px;width:1px;height:3.3px;background:#c6c6c6"></div><div class="a" style="left:1070.1px;top:50.2px;width:1px;height:3.3px;background:#c6c6c6"></div><div class="a" style="left:1078.1px;top:50.2px;width:1px;height:3.3px;background:#c6c6c6"></div><div class="a" style="left:1086.1px;top:46.9px;width:1px;height:6.6px;background:#c6c6c6"></div><div class="a" style="left:1094.0px;top:50.2px;width:1px;height:3.3px;background:#c6c6c6"></div><div class="a" style="left:1102.0px;top:50.2px;width:1px;height:3.3px;background:#c6c6c6"></div><div class="a" style="left:1110.0px;top:50.2px;width:1px;height:3.3px;background:#c6c6c6"></div><div class="a" style="left:1118.0px;top:50.2px;width:1px;height:3.3px;background:#c6c6c6"></div><div class="a" style="left:1126.0px;top:42.5px;width:1px;height:11px;background:#c6c6c6"></div><div class="a" style="left:1134.0px;top:50.2px;width:1px;height:3.3px;background:#c6c6c6"></div><div class="a" style="left:1142.0px;top:50.2px;width:1px;height:3.3px;background:#c6c6c6"></div><div class="a" style="left:1150.0px;top:50.2px;width:1px;height:3.3px;background:#c6c6c6"></div><div class="a" style="left:1158.0px;top:50.2px;width:1px;height:3.3px;background:#c6c6c6"></div><div class="a" style="left:1166.0px;top:46.9px;width:1px;height:6.6px;background:#c6c6c6"></div><div class="a" style="left:1173.9px;top:50.2px;width:1px;height:3.3px;background:#c6c6c6"></div><div class="a" style="left:1181.9px;top:50.2px;width:1px;height:3.3px;background:#c6c6c6"></div><div class="a" style="left:1189.9px;top:50.2px;width:1px;height:3.3px;background:#c6c6c6"></div><div class="a" style="left:1197.9px;top:50.2px;width:1px;height:3.3px;background:#c6c6c6"></div><div class="a" style="left:1205.9px;top:42.5px;width:1px;height:11px;background:#c6c6c6"></div><div class="a" style="left:1213.9px;top:50.2px;width:1px;height:3.3px;background:#c6c6c6"></div><div class="a" style="left:1221.9px;top:50.2px;width:1px;height:3.3px;background:#c6c6c6"></div><div class="a" style="left:1229.9px;top:50.2px;width:1px;height:3.3px;background:#c6c6c6"></div><div class="a" style="left:1237.9px;top:50.2px;width:1px;height:3.3px;background:#c6c6c6"></div><div class="a" style="left:1245.9px;top:46.9px;width:1px;height:6.6px;background:#c6c6c6"></div><div class="a" style="left:1253.8px;top:50.2px;width:1px;height:3.3px;background:#c6c6c6"></div><div class="a" style="left:1261.8px;top:50.2px;width:1px;height:3.3px;background:#c6c6c6"></div><div class="a" style="left:1269.8px;top:50.2px;width:1px;height:3.3px;background:#c6c6c6"></div><div class="a" style="left:1277.8px;top:50.2px;width:1px;height:3.3px;background:#c6c6c6"></div><div class="a" style="left:1285.8px;top:42.5px;width:1px;height:11px;background:#c6c6c6"></div><div class="a" style="left:1293.8px;top:50.2px;width:1px;height:3.3px;background:#c6c6c6"></div><div class="a" style="left:1301.8px;top:50.2px;width:1px;height:3.3px;background:#c6c6c6"></div><div class="a" style="left:1309.8px;top:50.2px;width:1px;height:3.3px;background:#c6c6c6"></div><div class="a" style="left:1317.8px;top:50.2px;width:1px;height:3.3px;background:#c6c6c6"></div><div class="a" style="left:1325.8px;top:46.9px;width:1px;height:6.6px;background:#c6c6c6"></div><div class="a" style="left:1333.7px;top:50.2px;width:1px;height:3.3px;background:#c6c6c6"></div><div class="a" style="left:1341.7px;top:50.2px;width:1px;height:3.3px;background:#c6c6c6"></div><div class="a" style="left:1349.7px;top:50.2px;width:1px;height:3.3px;background:#c6c6c6"></div><div class="a" style="left:1357.7px;top:50.2px;width:1px;height:3.3px;background:#c6c6c6"></div><div class="a" style="left:1365.7px;top:42.5px;width:1px;height:11px;background:#c6c6c6"></div><div class="a" style="left:1373.7px;top:50.2px;width:1px;height:3.3px;background:#c6c6c6"></div><div class="a" style="left:1381.7px;top:50.2px;width:1px;height:3.3px;background:#c6c6c6"></div><div class="a" style="left:1389.7px;top:50.2px;width:1px;height:3.3px;background:#c6c6c6"></div><div class="a" style="left:1397.7px;top:50.2px;width:1px;height:3.3px;background:#c6c6c6"></div><div class="a" style="left:1405.7px;top:46.9px;width:1px;height:6.6px;background:#c6c6c6"></div><div class="a" style="left:1413.6px;top:50.2px;width:1px;height:3.3px;background:#c6c6c6"></div><div class="a" style="left:1421.6px;top:50.2px;width:1px;height:3.3px;background:#c6c6c6"></div><div class="a" style="left:1429.6px;top:50.2px;width:1px;height:3.3px;background:#c6c6c6"></div><div class="a" style="left:1437.6px;top:50.2px;width:1px;height:3.3px;background:#c6c6c6"></div><div class="a" style="left:1445.6px;top:42.5px;width:1px;height:11px;background:#c6c6c6"></div><div class="a" style="left:1453.6px;top:50.2px;width:1px;height:3.3px;background:#c6c6c6"></div><div class="a" style="left:1461.6px;top:50.2px;width:1px;height:3.3px;background:#c6c6c6"></div><div class="a" style="left:1469.6px;top:50.2px;width:1px;height:3.3px;background:#c6c6c6"></div><div class="a" style="left:1477.6px;top:50.2px;width:1px;height:3.3px;background:#c6c6c6"></div><div class="a" style="left:1485.6px;top:46.9px;width:1px;height:6.6px;background:#c6c6c6"></div><div class="a" style="left:1493.5px;top:50.2px;width:1px;height:3.3px;background:#c6c6c6"></div><div class="a" style="left:1501.5px;top:50.2px;width:1px;height:3.3px;background:#c6c6c6"></div><div class="a" style="left:1509.5px;top:50.2px;width:1px;height:3.3px;background:#c6c6c6"></div><div class="a" style="left:1517.5px;top:50.2px;width:1px;height:3.3px;background:#c6c6c6"></div><div class="a" style="left:1525.5px;top:42.5px;width:1px;height:11px;background:#c6c6c6"></div><div class="a" style="left:1533.5px;top:50.2px;width:1px;height:3.3px;background:#c6c6c6"></div><div class="a" style="left:1541.5px;top:50.2px;width:1px;height:3.3px;background:#c6c6c6"></div><div class="a" style="left:1549.5px;top:50.2px;width:1px;height:3.3px;background:#c6c6c6"></div><div class="a" style="left:1557.5px;top:50.2px;width:1px;height:3.3px;background:#c6c6c6"></div><div class="a" style="left:1565.5px;top:46.9px;width:1px;height:6.6px;background:#c6c6c6"></div><div class="a" style="left:1573.4px;top:50.2px;width:1px;height:3.3px;background:#c6c6c6"></div><div class="a" style="left:1581.4px;top:50.2px;width:1px;height:3.3px;background:#c6c6c6"></div><div class="a" style="left:1589.4px;top:50.2px;width:1px;height:3.3px;background:#c6c6c6"></div><div class="a" style="left:1597.4px;top:50.2px;width:1px;height:3.3px;background:#c6c6c6"></div><div class="a" style="left:1605.4px;top:42.5px;width:1px;height:11px;background:#c6c6c6"></div><div class="a" style="left:1613.4px;top:50.2px;width:1px;height:3.3px;background:#c6c6c6"></div><div class="a" style="left:1621.4px;top:50.2px;width:1px;height:3.3px;background:#c6c6c6"></div><div class="a" style="left:1629.4px;top:50.2px;width:1px;height:3.3px;background:#c6c6c6"></div>
<div class="a" style="left:322.7px;top:62.5px;width:3.3px;height:1px;background:#c6c6c6"></div><div class="a" style="left:322.7px;top:70.5px;width:3.3px;height:1px;background:#c6c6c6"></div><div class="a" style="left:322.7px;top:78.5px;width:3.3px;height:1px;background:#c6c6c6"></div><div class="a" style="left:322.7px;top:86.5px;width:3.3px;height:1px;background:#c6c6c6"></div><div class="a" style="left:319.0px;top:94.4px;width:7px;height:1px;background:#c6c6c6"></div><div class="a" style="left:322.7px;top:102.4px;width:3.3px;height:1px;background:#c6c6c6"></div><div class="a" style="left:322.7px;top:110.4px;width:3.3px;height:1px;background:#c6c6c6"></div><div class="a" style="left:322.7px;top:118.4px;width:3.3px;height:1px;background:#c6c6c6"></div><div class="a" style="left:322.7px;top:126.4px;width:3.3px;height:1px;background:#c6c6c6"></div><div class="a" style="left:314.5px;top:134.4px;width:11.5px;height:1px;background:#c6c6c6"></div><div class="a" style="left:322.7px;top:142.4px;width:3.3px;height:1px;background:#c6c6c6"></div><div class="a" style="left:322.7px;top:150.4px;width:3.3px;height:1px;background:#c6c6c6"></div><div class="a" style="left:322.7px;top:158.4px;width:3.3px;height:1px;background:#c6c6c6"></div><div class="a" style="left:322.7px;top:166.4px;width:3.3px;height:1px;background:#c6c6c6"></div><div class="a" style="left:319.0px;top:174.4px;width:7px;height:1px;background:#c6c6c6"></div><div class="a" style="left:322.7px;top:182.3px;width:3.3px;height:1px;background:#c6c6c6"></div><div class="a" style="left:322.7px;top:190.3px;width:3.3px;height:1px;background:#c6c6c6"></div><div class="a" style="left:322.7px;top:198.3px;width:3.3px;height:1px;background:#c6c6c6"></div><div class="a" style="left:322.7px;top:206.3px;width:3.3px;height:1px;background:#c6c6c6"></div><div class="a" style="left:314.5px;top:214.3px;width:11.5px;height:1px;background:#c6c6c6"></div><div class="a" style="left:322.7px;top:222.3px;width:3.3px;height:1px;background:#c6c6c6"></div><div class="a" style="left:322.7px;top:230.3px;width:3.3px;height:1px;background:#c6c6c6"></div><div class="a" style="left:322.7px;top:238.3px;width:3.3px;height:1px;background:#c6c6c6"></div><div class="a" style="left:322.7px;top:246.3px;width:3.3px;height:1px;background:#c6c6c6"></div><div class="a" style="left:319.0px;top:254.3px;width:7px;height:1px;background:#c6c6c6"></div><div class="a" style="left:322.7px;top:262.2px;width:3.3px;height:1px;background:#c6c6c6"></div><div class="a" style="left:322.7px;top:270.2px;width:3.3px;height:1px;background:#c6c6c6"></div><div class="a" style="left:322.7px;top:278.2px;width:3.3px;height:1px;background:#c6c6c6"></div><div class="a" style="left:322.7px;top:286.2px;width:3.3px;height:1px;background:#c6c6c6"></div><div class="a" style="left:314.5px;top:294.2px;width:11.5px;height:1px;background:#c6c6c6"></div><div class="a" style="left:322.7px;top:302.2px;width:3.3px;height:1px;background:#c6c6c6"></div><div class="a" style="left:322.7px;top:310.2px;width:3.3px;height:1px;background:#c6c6c6"></div><div class="a" style="left:322.7px;top:318.2px;width:3.3px;height:1px;background:#c6c6c6"></div><div class="a" style="left:322.7px;top:326.2px;width:3.3px;height:1px;background:#c6c6c6"></div><div class="a" style="left:319.0px;top:334.2px;width:7px;height:1px;background:#c6c6c6"></div><div class="a" style="left:322.7px;top:342.1px;width:3.3px;height:1px;background:#c6c6c6"></div><div class="a" style="left:322.7px;top:350.1px;width:3.3px;height:1px;background:#c6c6c6"></div><div class="a" style="left:322.7px;top:358.1px;width:3.3px;height:1px;background:#c6c6c6"></div><div class="a" style="left:322.7px;top:366.1px;width:3.3px;height:1px;background:#c6c6c6"></div><div class="a" style="left:314.5px;top:374.1px;width:11.5px;height:1px;background:#c6c6c6"></div><div class="a" style="left:322.7px;top:382.1px;width:3.3px;height:1px;background:#c6c6c6"></div><div class="a" style="left:322.7px;top:390.1px;width:3.3px;height:1px;background:#c6c6c6"></div><div class="a" style="left:322.7px;top:398.1px;width:3.3px;height:1px;background:#c6c6c6"></div><div class="a" style="left:322.7px;top:406.1px;width:3.3px;height:1px;background:#c6c6c6"></div><div class="a" style="left:319.0px;top:414.1px;width:7px;height:1px;background:#c6c6c6"></div><div class="a" style="left:322.7px;top:422.0px;width:3.3px;height:1px;background:#c6c6c6"></div><div class="a" style="left:322.7px;top:430.0px;width:3.3px;height:1px;background:#c6c6c6"></div><div class="a" style="left:322.7px;top:438.0px;width:3.3px;height:1px;background:#c6c6c6"></div><div class="a" style="left:322.7px;top:446.0px;width:3.3px;height:1px;background:#c6c6c6"></div><div class="a" style="left:314.5px;top:454.0px;width:11.5px;height:1px;background:#c6c6c6"></div><div class="a" style="left:322.7px;top:462.0px;width:3.3px;height:1px;background:#c6c6c6"></div><div class="a" style="left:322.7px;top:470.0px;width:3.3px;height:1px;background:#c6c6c6"></div><div class="a" style="left:322.7px;top:478.0px;width:3.3px;height:1px;background:#c6c6c6"></div><div class="a" style="left:322.7px;top:486.0px;width:3.3px;height:1px;background:#c6c6c6"></div><div class="a" style="left:319.0px;top:494.0px;width:7px;height:1px;background:#c6c6c6"></div><div class="a" style="left:322.7px;top:501.9px;width:3.3px;height:1px;background:#c6c6c6"></div><div class="a" style="left:322.7px;top:509.9px;width:3.3px;height:1px;background:#c6c6c6"></div><div class="a" style="left:322.7px;top:517.9px;width:3.3px;height:1px;background:#c6c6c6"></div><div class="a" style="left:322.7px;top:525.9px;width:3.3px;height:1px;background:#c6c6c6"></div>
<div class="a hatch" style="left:327px;top:55px;width:1307px;height:466.5px"></div>
<div class="a hatch" style="left:327px;top:55px;width:1308.2px;height:467.0px;border:1px dotted #a9a9b0"></div>
<div class="lbl" style="left:328px;top:56px">XPA Component Container</div>
<div class="a hatch" style="left:453.5px;top:68.3px;width:1055.8px;height:439.7px;border:1px dotted #a9a9b0"></div>
<div class="lbl" style="left:454.5px;top:69.3px">Container</div>
<div class="a hatch" style="left:446.3px;top:81.2px;width:1070.0px;height:397.8px;border:1px dotted #a9a9b0"></div>
<div class="lbl" style="left:447.3px;top:82.2px">Row</div>
<div class="a hatch" style="left:449.9px;top:94px;width:532.5px;height:371.5px;border:1px dotted #a9a9b0"></div>
<div class="lbl" style="left:450.9px;top:95px">Column</div>
<div class="a hatch" style="left:981px;top:94px;width:532.0px;height:371.6px;border:1px dotted #a9a9b0"></div>
<div class="lbl" style="left:982px;top:95px">Column</div>
<div class="a" style="left:451px;top:139.6px;width:529px;height:1px;background:#c9c9cf"></div>
<div class="a" style="left:983px;top:139.6px;width:528px;height:1px;background:#c9c9cf"></div>
<div class="t" style="left:452px;top:112.00px;font-size:17.9px;color:#2c3844;transform:scaleX(1.108);transform-origin:0 0;-webkit-text-stroke:0.25px #2c3844">Event Information</div>
<div class="t" style="left:983.6px;top:112.00px;font-size:17.9px;color:#2c3844;transform:scaleX(1.082);transform-origin:0 0;-webkit-text-stroke:0.25px #2c3844">Attendees</div>
<div class="a hatch" style="left:442.6px;top:151.8px;width:532.8px;height:74.5px;border:1px dotted #a9a9b0"></div>
<div class="lbl" style="left:443.6px;top:152.8px">Row</div>
<div class="a hatch" style="left:443.5px;top:163.60000000000002px;width:272.5px;height:47.7px;border:1px dotted #a9a9b0"></div>
<div class="lbl" style="left:444.5px;top:164.60000000000002px">Column</div>
<div class="a hatch" style="left:715px;top:163.60000000000002px;width:260.4px;height:47.7px;border:1px dotted #a9a9b0"></div>
<div class="lbl" style="left:716px;top:164.60000000000002px">Column</div>
<div class="a hatch" style="left:442.6px;top:227.23000000000002px;width:539.8px;height:74.5px;border:1px dotted #a9a9b0"></div>
<div class="lbl" style="left:443.6px;top:228.23000000000002px">Row</div>
<div class="a hatch" style="left:443.5px;top:239.03000000000003px;width:272.5px;height:47.7px;border:1px dotted #a9a9b0"></div>
<div class="lbl" style="left:444.5px;top:240.03000000000003px">Column</div>
<div class="a hatch" style="left:715px;top:239.03000000000003px;width:267.4px;height:47.7px;border:1px dotted #a9a9b0"></div>
<div class="lbl" style="left:716px;top:240.03000000000003px">Column</div>
<div class="a hatch" style="left:442.6px;top:302.66px;width:539.8px;height:74.5px;border:1px dotted #a9a9b0"></div>
<div class="lbl" style="left:443.6px;top:303.66px">Row</div>
<div class="a hatch" style="left:443.5px;top:314.46000000000004px;width:272.5px;height:47.7px;border:1px dotted #a9a9b0"></div>
<div class="lbl" style="left:444.5px;top:315.46000000000004px">Column</div>
<div class="a hatch" style="left:715px;top:314.46000000000004px;width:267.4px;height:47.7px;border:1px dotted #a9a9b0"></div>
<div class="lbl" style="left:716px;top:315.46000000000004px">Column</div>
<div class="a hatch" style="left:442.6px;top:378.09000000000003px;width:539.8px;height:74.5px;border:1px dotted #a9a9b0"></div>
<div class="lbl" style="left:443.6px;top:379.09000000000003px">Row</div>
<div class="a hatch" style="left:443.5px;top:389.89000000000004px;width:272.5px;height:47.7px;border:1px dotted #a9a9b0"></div>
<div class="lbl" style="left:444.5px;top:390.89000000000004px">Column</div>
<div class="a" style="left:715px;top:389.89000000000004px;width:270px;height:47.7px;background:rgba(205,205,215,.55);border:1px dashed #8a8a8a"></div>
<div class="lbl" style="left:716px;top:390.89000000000004px">Column</div>
<div class="a hatch" style="left:974.3px;top:151.4px;width:546.3px;height:47.2px;border:1px dotted #a9a9b0"></div>
<div class="lbl" style="left:975.3px;top:152.4px">Row</div>
<div class="a hatch" style="left:974.3px;top:199.3px;width:546.3px;height:47.7px;border:1px dotted #a9a9b0"></div>
<div class="lbl" style="left:975.3px;top:200.3px">Row</div>
<div class="a" style="left:313.2px;top:532.5px;width:1321.6px;height:2.5px;background:#ababab"></div>
<div class="a" style="left:313.2px;top:535px;width:1321.8px;height:26px;background:#f4f4f4"></div>
<div class="a" style="left:317.8px;top:537.8px;width:89.7px;height:23px;background:#6cb6e1;border-top:1px solid #c8c8c8;border-left:1px solid #c8c8c8"></div>
<svg class="a" style="left:326px;top:544px" width="16" height="12" viewBox="0 0 16 12">
<path d="M4.5 2 L1.3 6 L4.5 10 M11.5 2 L14.7 6 L11.5 10 M9.2 0.8 L6.8 11.2" fill="none" stroke="#e3f2fb" stroke-width="1.3"/></svg>
<div class="t" style="left:355px;top:546.00px;font-size:10.9px;color:#fff">Template</div>
<div class="tab" style="left:412.5px;top:537.8px;width:101.3px;height:23px"></div>
<svg class="a" style="left:421px;top:543px" width="13" height="13" viewBox="-6.5 -6.5 13 13">
<g fill="#6e6e6e"><circle r="4.3"/><rect x="-1.3" y="-6.3" width="2.6" height="3" transform="rotate(0)"/><rect x="-1.3" y="-6.3" width="2.6" height="3" transform="rotate(45)"/><rect x="-1.3" y="-6.3" width="2.6" height="3" transform="rotate(90)"/><rect x="-1.3" y="-6.3" width="2.6" height="3" transform="rotate(135)"/><rect x="-1.3" y="-6.3" width="2.6" height="3" transform="rotate(180)"/><rect x="-1.3" y="-6.3" width="2.6" height="3" transform="rotate(225)"/><rect x="-1.3" y="-6.3" width="2.6" height="3" transform="rotate(270)"/><rect x="-1.3" y="-6.3" width="2.6" height="3" transform="rotate(315)"/></g><circle r="1.8" fill="#efefef"/></svg>
<div class="t" style="left:447.5px;top:546.00px;font-size:11px;color:#6a6a6a">Component</div>
<div class="tab" style="left:518px;top:537.8px;width:98.8px;height:23px"></div>
<svg class="a" style="left:527.5px;top:543.5px" width="14.5" height="12" viewBox="0 0 14.5 12">
<rect x="0.6" y="0.6" width="13.3" height="10.8" fill="none" stroke="#777" stroke-width="1.2"/><path d="M2 10 L6 5 L8.5 7.5 L10 6 L12.5 10 Z" fill="#777"/><circle cx="4" cy="3.6" r="1.2" fill="#777"/></svg>
<div class="t" style="left:555.5px;top:546.00px;font-size:10.8px;color:#6a6a6a">Styles</div>
<svg class="a" style="left:595px;top:543.5px" width="13" height="12" viewBox="0 0 13 12">
<path d="M1.8 5.4 A4.7 4.7 0 0 1 10.3 3.2 M11.2 6.6 A4.7 4.7 0 0 1 2.7 8.8" fill="none" stroke="#8a8a8a" stroke-width="1.8"/>
<path d="M12.5 0.5 V5 H8 Z M0.5 11.5 V7 H5 Z" fill="#8a8a8a"/></svg>
<div class="tab" style="left:1499.3px;top:537.8px;width:131.2px;height:23px"></div>
<svg class="a" style="left:1507px;top:542px" width="9" height="14" viewBox="0 0 9 14">
<path d="M4 0.5 L1 7 H4 L3 13.5 L8 5.5 H5 L6.5 0.5 Z" fill="#777"/></svg>
<div class="t" style="left:1531px;top:546.00px;font-size:11.1px;color:#6a6a6a">Live Preview Logs</div>
<div class="a" style="left:313.2px;top:560.6px;width:1321.8px;height:4.2px;background:#0094d9"></div>
<div class="a" style="left:313.2px;top:564.8px;width:1317.8px;height:345.2px;background:#fefefd"></div>
<div class="a" style="left:1630.6px;top:564.8px;width:4.6px;height:345.2px;background:#fff;border-left:1px solid #d8d8d8"></div>
<div class="a" style="left:1630.6px;top:564.8px;width:4.6px;height:151.2px;background:#bdbdbd;border-left:1px solid #a9a9a9"></div>
<div class="a" style="left:1631.5px;top:687.5px;width:3px;height:1.2px;background:#777"></div>
<div class="a" style="left:458.6px;top:839.58px;width:307.4px;height:14.5px;background:#e4e8f0"></div>
<div class="g" style="left:360.5px;top:581.36px;height:15.26px"></div>
<div class="g" style="left:360.5px;top:596.52px;height:15.26px"></div>
<div class="g" style="left:385.2px;top:596.52px;height:15.26px"></div>
<div class="g" style="left:360.5px;top:611.68px;height:15.26px"></div>
<div class="g" style="left:385.2px;top:611.68px;height:15.26px"></div>
<div class="g" style="left:409.8px;top:611.68px;height:15.26px"></div>
<div class="g" style="left:360.5px;top:626.84px;height:15.26px"></div>
<div class="g" style="left:385.2px;top:626.84px;height:15.26px"></div>
<div class="g" style="left:409.8px;top:626.84px;height:15.26px"></div>
<div class="g" style="left:360.5px;top:642.00px;height:15.26px"></div>
<div class="g" style="left:385.2px;top:642.00px;height:15.26px"></div>
<div class="g" style="left:409.8px;top:642.00px;height:15.26px"></div>
<div class="g" style="left:434.5px;top:642.00px;height:15.26px"></div>
<div class="g" style="left:360.5px;top:657.16px;height:15.26px"></div>
<div class="g" style="left:385.2px;top:657.16px;height:15.26px"></div>
<div class="g" style="left:409.8px;top:657.16px;height:15.26px"></div>
<div class="g" style="left:434.5px;top:657.16px;height:15.26px"></div>
<div class="g" style="left:360.5px;top:672.32px;height:15.26px"></div>
<div class="g" style="left:385.2px;top:672.32px;height:15.26px"></div>
<div class="g" style="left:409.8px;top:672.32px;height:15.26px"></div>
<div class="g" style="left:360.5px;top:687.48px;height:15.26px"></div>
<div class="g" style="left:385.2px;top:687.48px;height:15.26px"></div>
<div class="g" style="left:409.8px;top:687.48px;height:15.26px"></div>
<div class="g" style="left:360.5px;top:702.64px;height:15.26px"></div>
<div class="g" style="left:385.2px;top:702.64px;height:15.26px"></div>
<div class="g" style="left:409.8px;top:702.64px;height:15.26px"></div>
<div class="g" style="left:434.5px;top:702.64px;height:15.26px"></div>
<div class="g" style="left:360.5px;top:717.80px;height:15.26px"></div>
<div class="g" style="left:385.2px;top:717.80px;height:15.26px"></div>
<div class="g" style="left:409.8px;top:717.80px;height:15.26px"></div>
<div class="g" style="left:434.5px;top:717.80px;height:15.26px"></div>
<div class="g" style="left:360.5px;top:732.96px;height:15.26px"></div>
<div class="g" style="left:385.2px;top:732.96px;height:15.26px"></div>
<div class="g" style="left:409.8px;top:732.96px;height:15.26px"></div>
<div class="g" style="left:360.5px;top:748.12px;height:15.26px"></div>
<div class="g" style="left:385.2px;top:748.12px;height:15.26px"></div>
<div class="g" style="left:409.8px;top:748.12px;height:15.26px"></div>
<div class="g" style="left:360.5px;top:763.28px;height:15.26px"></div>
<div class="g" style="left:385.2px;top:763.28px;height:15.26px"></div>
<div class="g" style="left:409.8px;top:763.28px;height:15.26px"></div>
<div class="g" style="left:434.5px;top:763.28px;height:15.26px"></div>
<div class="g" style="left:360.5px;top:778.44px;height:15.26px"></div>
<div class="g" style="left:385.2px;top:778.44px;height:15.26px"></div>
<div class="g" style="left:409.8px;top:778.44px;height:15.26px"></div>
<div class="g" style="left:434.5px;top:778.44px;height:15.26px"></div>
<div class="g" style="left:360.5px;top:793.60px;height:15.26px"></div>
<div class="g" style="left:385.2px;top:793.60px;height:15.26px"></div>
<div class="g" style="left:409.8px;top:793.60px;height:15.26px"></div>
<div class="g" style="left:360.5px;top:808.76px;height:15.26px"></div>
<div class="g" style="left:385.2px;top:808.76px;height:15.26px"></div>
<div class="g" style="left:409.8px;top:808.76px;height:15.26px"></div>
<div class="g" style="left:360.5px;top:823.92px;height:15.26px"></div>
<div class="g" style="left:385.2px;top:823.92px;height:15.26px"></div>
<div class="g" style="left:409.8px;top:823.92px;height:15.26px"></div>
<div class="g" style="left:434.5px;top:823.92px;height:15.26px"></div>
<div class="g" style="left:360.5px;top:839.08px;height:15.26px"></div>
<div class="g" style="left:385.2px;top:839.08px;height:15.26px"></div>
<div class="g" style="left:409.8px;top:839.08px;height:15.26px"></div>
<div class="g" style="left:434.5px;top:839.08px;height:15.26px"></div>
<div class="g" style="left:360.5px;top:854.24px;height:15.26px"></div>
<div class="g" style="left:385.2px;top:854.24px;height:15.26px"></div>
<div class="g" style="left:409.8px;top:854.24px;height:15.26px"></div>
<div class="g" style="left:360.5px;top:869.40px;height:15.26px"></div>
<div class="g" style="left:385.2px;top:869.40px;height:15.26px"></div>
<div class="g" style="left:360.5px;top:884.56px;height:15.26px"></div>
<div class="g" style="left:385.2px;top:884.56px;height:15.26px"></div>
<div class="g" style="left:360.5px;top:899.72px;height:15.26px"></div>
<div class="g" style="left:385.2px;top:899.72px;height:15.26px"></div>
<div class="g" style="left:409.8px;top:899.72px;height:15.26px"></div>
<div class="ln" style="top:566.20px">1</div>
<div class="code" style="top:566.20px"><span class="p">&lt;</span><span class="tg">c-container</span> <span class="k">[</span><span class="at">formGroup</span><span class="k">]</span><span class="k">=</span><span class="v">"screenFormGroup"</span> <span class="at">novalidate</span> <span class="at">data-comp-id</span><span class="k">=</span><span class="v">"c-container.1"</span> <span class="k">[</span><span class="at">magic</span><span class="k">]</span><span class="k">=</span><span class="v">"mgc.EventCard"</span> <span class="at">class</span><span class="k">=</span><span class="v">"allSideSpacing-containers"</span><span class="p">&gt;</span></div>
<div class="ln" style="top:581.36px">2</div>
<div class="code" style="top:581.36px"><span class="k">    </span><span class="p">&lt;</span><span class="tg">c-row</span> <span class="at">data-comp-id</span><span class="k">=</span><span class="v">"c-row.1"</span> <span class="at">id</span><span class="k">=</span><span class="v">"c-row.1"</span> <span class="at">class</span><span class="k">=</span><span class="v">"smallSpacingBottomOutsideContainer"</span><span class="p">&gt;</span></div>
<div class="ln" style="top:596.52px">3</div>
<div class="code" style="top:596.52px"><span class="k">        </span><span class="p">&lt;</span><span class="tg">c-col</span> <span class="at">data-comp-id</span><span class="k">=</span><span class="v">"c-column.1"</span> <span class="at">id</span><span class="k">=</span><span class="v">"c-column.1"</span><span class="p">&gt;</span></div>
<div class="ln" style="top:611.68px">4</div>
<div class="code" style="top:611.68px"><span class="k">            </span><span class="p">&lt;</span><span class="tg">h4</span> <span class="at">data-comp-id</span><span class="k">=</span><span class="v">"h4.1"</span> <span class="at">id</span><span class="k">=</span><span class="v">"h4.1"</span> <span class="at">class</span><span class="k">=</span><span class="v">"horizontal-line-bottom"</span><span class="p">&gt;</span><span class="k">Event Information</span><span class="p">&lt;/</span><span class="tg">h4</span><span class="p">&gt;</span></div>
<div class="ln" style="top:626.84px">5</div>
<div class="code" style="top:626.84px"><span class="k">            </span><span class="p">&lt;</span><span class="tg">c-row</span> <span class="at">data-comp-id</span><span class="k">=</span><span class="v">"c-row.2"</span> <span class="at">id</span><span class="k">=</span><span class="v">"c-row.2"</span><span class="p">&gt;</span></div>
<div class="ln" style="top:642.00px">6</div>
<div class="code" style="top:642.00px"><span class="k">                </span><span class="p">&lt;</span><span class="tg">c-col</span> <span class="at">data-comp-id</span><span class="k">=</span><span class="v">"c-column.2"</span> <span class="at">id</span><span class="k">=</span><span class="v">"c-column.3"</span><span class="p">&gt;</span><span class="p">&lt;/</span><span class="tg">c-col</span><span class="p">&gt;</span></div>
<div class="ln" style="top:657.16px">7</div>
<div class="code" style="top:657.16px"><span class="k">                </span><span class="p">&lt;</span><span class="tg">c-col</span> <span class="at">data-comp-id</span><span class="k">=</span><span class="v">"c-column.3"</span> <span class="at">id</span><span class="k">=</span><span class="v">"c-column.4"</span><span class="p">&gt;</span><span class="p">&lt;/</span><span class="tg">c-col</span><span class="p">&gt;</span></div>
<div class="ln" style="top:672.32px">8</div>
<div class="code" style="top:672.32px"><span class="k">            </span><span class="p">&lt;/</span><span class="tg">c-row</span><span class="p">&gt;</span></div>
<div class="ln" style="top:687.48px">9</div>
<div class="code" style="top:687.48px"><span class="k">            </span><span class="p">&lt;</span><span class="tg">c-row</span> <span class="at">data-comp-id</span><span class="k">=</span><span class="v">"c-row.3"</span> <span class="at">id</span><span class="k">=</span><span class="v">"c-row.3"</span><span class="p">&gt;</span></div>
<div class="ln" style="top:702.64px">10</div>
<div class="code" style="top:702.64px"><span class="k">                </span><span class="p">&lt;</span><span class="tg">c-col</span> <span class="at">data-comp-id</span><span class="k">=</span><span class="v">"c-column.4"</span> <span class="at">id</span><span class="k">=</span><span class="v">"c-column.5"</span><span class="p">&gt;</span><span class="p">&lt;/</span><span class="tg">c-col</span><span class="p">&gt;</span></div>
<div class="ln" style="top:717.80px">11</div>
<div class="code" style="top:717.80px"><span class="k">                </span><span class="p">&lt;</span><span class="tg">c-col</span> <span class="at">data-comp-id</span><span class="k">=</span><span class="v">"c-column.5"</span> <span class="at">id</span><span class="k">=</span><span class="v">"c-column.6"</span><span class="p">&gt;</span><span class="p">&lt;/</span><span class="tg">c-col</span><span class="p">&gt;</span></div>
<div class="ln" style="top:732.96px">12</div>
<div class="code" style="top:732.96px"><span class="k">            </span><span class="p">&lt;/</span><span class="tg">c-row</span><span class="p">&gt;</span></div>
<div class="ln" style="top:748.12px">13</div>
<div class="code" style="top:748.12px"><span class="k">            </span><span class="p">&lt;</span><span class="tg">c-row</span> <span class="at">data-comp-id</span><span class="k">=</span><span class="v">"c-row.4"</span> <span class="at">id</span><span class="k">=</span><span class="v">"c-row.4"</span><span class="p">&gt;</span></div>
<div class="ln" style="top:763.28px">14</div>
<div class="code" style="top:763.28px"><span class="k">                </span><span class="p">&lt;</span><span class="tg">c-col</span> <span class="at">data-comp-id</span><span class="k">=</span><span class="v">"c-column.6"</span> <span class="at">id</span><span class="k">=</span><span class="v">"c-column.7"</span><span class="p">&gt;</span><span class="p">&lt;/</span><span class="tg">c-col</span><span class="p">&gt;</span></div>
<div class="ln" style="top:778.44px">15</div>
<div class="code" style="top:778.44px"><span class="k">                </span><span class="p">&lt;</span><span class="tg">c-col</span> <span class="at">data-comp-id</span><span class="k">=</span><span class="v">"c-column.7"</span> <span class="at">id</span><span class="k">=</span><span class="v">"c-column.8"</span><span class="p">&gt;</span><span class="p">&lt;/</span><span class="tg">c-col</span><span class="p">&gt;</span></div>
<div class="ln" style="top:793.60px">16</div>
<div class="code" style="top:793.60px"><span class="k">            </span><span class="p">&lt;/</span><span class="tg">c-row</span><span class="p">&gt;</span></div>
<div class="ln" style="top:808.76px">17</div>
<div class="code" style="top:808.76px"><span class="k">            </span><span class="p">&lt;</span><span class="tg">c-row</span> <span class="at">data-comp-id</span><span class="k">=</span><span class="v">"c-row.5"</span> <span class="at">id</span><span class="k">=</span><span class="v">"c-row.5"</span><span class="p">&gt;</span></div>
<div class="ln" style="top:823.92px">18</div>
<div class="code" style="top:823.92px"><span class="k">                </span><span class="p">&lt;</span><span class="tg">c-col</span> <span class="at">data-comp-id</span><span class="k">=</span><span class="v">"c-column.8"</span> <span class="at">id</span><span class="k">=</span><span class="v">"c-column.9"</span><span class="p">&gt;</span><span class="p">&lt;/</span><span class="tg">c-col</span><span class="p">&gt;</span></div>
<div class="ln" style="top:839.08px">19</div>
<div class="code" style="top:839.08px"><span class="k">                </span><span class="p">&lt;</span><span class="tg">c-col</span> <span class="at">data-comp-id</span><span class="k">=</span><span class="v">"c-column.9"</span> <span class="at">id</span><span class="k">=</span><span class="v">"c-column.10"</span><span class="p">&gt;</span><span class="p">&lt;/</span><span class="tg">c-col</span><span class="p">&gt;</span></div>
<div class="ln" style="top:854.24px">20</div>
<div class="code" style="top:854.24px"><span class="k">            </span><span class="p">&lt;/</span><span class="tg">c-row</span><span class="p">&gt;</span></div>
<div class="ln" style="top:869.40px">21</div>
<div class="code" style="top:869.40px"><span class="k">        </span><span class="p">&lt;/</span><span class="tg">c-col</span><span class="p">&gt;</span></div>
<div class="ln" style="top:884.56px">22</div>
<div class="code" style="top:884.56px"><span class="k">        </span><span class="p">&lt;</span><span class="tg">c-col</span> <span class="at">data-comp-id</span><span class="k">=</span><span class="v">"c-column.10"</span> <span class="at">id</span><span class="k">=</span><span class="v">"c-column.2"</span><span class="p">&gt;</span></div>
<div class="ln" style="top:899.72px">23</div>
<div class="code" style="top:899.72px"><span class="k">            </span><span class="p">&lt;</span><span class="tg">h4</span> <span class="at">data-comp-id</span><span class="k">=</span><span class="v">"h4.2"</span> <span class="at">id</span><span class="k">=</span><span class="v">"h4.2"</span> <span class="at">class</span><span class="k">=</span><span class="v">"horizontal-line-bottom"</span><span class="p">&gt;</span><span class="k">Attendees</span><span class="p">&lt;/</span><span class="tg">h4</span><span class="p">&gt;</span></div>
<div class="a" style="left:313.2px;top:909px;width:1317.8px;height:1px;border-top:1px dotted #c5cde0"></div>
<div class="a" style="left:1635px;top:40px;width:4.5px;height:870px;background:#c4c4c4;border-left:1px solid #a8a8a8;border-right:1px solid #d6d6d6"></div>
<div class="a" style="left:1639.5px;top:40px;width:280.5px;height:870px;background:#f3f3f3"></div>
<div class="a" style="left:1639.5px;top:40px;width:280.5px;height:26px;background:#f6f6f6"></div>
<div class="tab" style="left:1643.9px;top:44.3px;width:76.7px;height:21.9px"></div>
<svg class="a" style="left:1652.5px;top:49px" width="12.5" height="14" viewBox="0 0 12.5 14">
<g fill="#777"><ellipse cx="6.25" cy="2.6" rx="6" ry="2.3"/><path d="M0.25 4.2 C1 6.5 11.5 6.5 12.25 4.2 V6.3 C11.5 8.6 1 8.6 0.25 6.3 Z"/><path d="M0.25 7.6 C1 9.9 11.5 9.9 12.25 7.6 V9.7 C11.5 12 1 12 0.25 9.7 Z"/><path d="M0.25 11 C1 13.3 11.5 13.3 12.25 11 V11.8 C11.5 14.1 1 14.1 0.25 11.8 Z"/></g></svg>
<div class="a" style="left:1677.8px;top:45px;width:34.5px;height:20px;overflow:hidden"><div class="t" style="left:0px;top:7.00px;font-size:11.1px;color:#777">Models</div></div>
<div class="tab" style="left:1724.4px;top:44.3px;width:77.8px;height:21.9px"></div>
<svg class="a" style="left:1733.5px;top:50px" width="14" height="12" viewBox="0 0 14 12">
<g fill="#777"><rect x="5" y="0" width="4" height="3.2"/><rect x="6.4" y="3" width="1.2" height="2.5"/><rect x="1.5" y="5" width="11" height="1.2"/><rect x="1.5" y="5" width="1.2" height="3"/><rect x="11.3" y="5" width="1.2" height="3"/><rect x="6.4" y="5" width="1.2" height="3"/><rect x="0" y="8" width="4" height="4"/><rect x="5" y="8" width="4" height="4"/><rect x="10" y="8" width="4" height="4"/></g></svg>
<div class="a" style="left:1760.7px;top:45px;width:33px;height:20px;overflow:hidden"><div class="t" style="left:0px;top:7.00px;font-size:11.1px;color:#777">Outline</div></div>
<div class="a" style="left:1806.7px;top:44.3px;width:111.8px;height:21.9px;background:#6cb6e1"></div>
<svg class="a" style="left:1815px;top:49.5px" width="15" height="12" viewBox="0 0 15 12">
<g fill="#fff"><rect x="0" y="0" width="2" height="1.8"/><rect x="3" y="0" width="12" height="1.8"/><rect x="0" y="3.4" width="2" height="1.8"/><rect x="3" y="3.4" width="12" height="1.8"/><rect x="0" y="6.8" width="2" height="1.8"/><rect x="3" y="6.8" width="12" height="1.8"/><rect x="0" y="10.2" width="2" height="1.8"/><rect x="3" y="10.2" width="12" height="1.8"/></g></svg>
<div class="a" style="left:1842.7px;top:45px;width:68px;height:20px;overflow:hidden"><div class="t" style="left:0px;top:7.00px;font-size:11.1px;color:#fff">PropertySheet</div></div>
<div class="a" style="left:1918.5px;top:40px;width:1.5px;height:870px;background:#dcdcdc"></div>
<div class="a" style="left:1639.5px;top:66.2px;width:279px;height:3.8px;background:#0094d9"></div>
<div class="a" style="left:1639.5px;top:70px;width:279px;height:26px;background:#d7d7d7"></div>
<div class="t" style="left:1647.8px;top:77.00px;font-size:11.1px;color:#222">Column</div>
<svg class="a" style="left:1901.8px;top:76.5px" width="10" height="11.5" viewBox="0 0 10 11.5">
<g fill="#1a8bd6"><rect x="0" y="1.3" width="10" height="1.4"/><rect x="3.2" y="0" width="3.6" height="1.6"/><path d="M1 3.2 H9 L8.4 11.5 H1.6 Z"/></g>
<path d="M3.3 4.5 V10.2 M5 4.5 V10.2 M6.7 4.5 V10.2" stroke="#d7d7d7" stroke-width="0.7"/></svg>
<div class="psec" style="top:96px"><div class="tri"></div><b>Events &amp; Data</b></div>
<div class="t" style="left:1646.5px;top:124.00px;font-size:9.6px;color:#333">Id</div>
<div class="a" style="left:1660.8px;top:120.3px;width:252.2px;height:16.5px;background:#fff;border:1px solid #a9a9a9"></div>
<div class="t" style="left:1664.7px;top:124.00px;font-size:9.9px;color:#222">c-column.10</div>
<div class="psec" style="top:146px"><div class="tri"></div><b>Breakpoints</b></div>
<div class="sel" style="top:170.20px"></div>
<div class="blab" style="top:173.40px">Extra small (xs)</div>
<div class="sel" style="top:189.28px"></div>
<div class="blab" style="top:192.48px">Small (sm)</div>
<div class="sel" style="top:208.36px"></div>
<div class="blab" style="top:211.56px">Medium (md)</div>
<div class="sel" style="top:227.44px"></div>
<div class="blab" style="top:230.64px">Large (lg)</div>
<div class="sel" style="top:246.52px"></div>
<div class="blab" style="top:249.72px">Extra large (xl)</div>
<div class="sel" style="top:265.60px"></div>
<div class="blab" style="top:268.80px">Extra extra large (xxl)</div>
<div class="psec" style="top:291px"><div class="tri"></div><b>Styling Overrides</b></div>
<div class="t" style="left:1646px;top:318.00px;font-size:9.6px;color:#333">Class</div>
<div class="a" style="left:1676.6px;top:315px;width:236.4px;height:23.5px;background:#fff;border:1px solid #a9a9a9"></div>
<div class="t" style="left:1681.5px;top:322.00px;font-size:11.1px;color:#8a8a8a">Select class...</div>
<div class="psec" style="top:353px"><div class="tri"></div><b>Dynamic Properties</b></div>
<svg class="a" style="left:1647.3px;top:379.5px" width="11" height="11" viewBox="0 0 11 11">
<path d="M5.5 0.5 V10.5 M0.5 5.5 H10.5" stroke="#111" stroke-width="2.4"/></svg>
<div class="t" style="left:1664px;top:380.00px;font-size:10.7px;color:#222">Add New Property</div>
<div class="a" style="left:40.5px;top:147.8px;width:121.5px;height:57px;border:10.3px solid #fecf3f;border-left-width:10.5px"></div>
<div class="a" style="left:413px;top:141.6px;width:595px;height:331.8px;border:10px solid #fecf3f"></div>
<svg class="a" style="left:0;top:0" width="420" height="300" viewBox="0 0 420 300">
<path d="M175 183 Q 230 262 392 253.5" fill="none" stroke="#fecf3f" stroke-width="11.5" stroke-linecap="round"/>
<path d="M348 224 L393 253.5 L348 282" fill="none" stroke="#fecf3f" stroke-width="11.5" stroke-linecap="round" stroke-linejoin="round"/>
</svg>
<svg class="a" style="left:30px;top:830px" width="52" height="52" viewBox="0 0 52 52">
<defs><radialGradient id="mg" cx="62%" cy="35%" r="65%"><stop offset="0" stop-color="#12a6dd"/><stop offset="0.55" stop-color="#0a70b0"/><stop offset="1" stop-color="#0a5592"/></radialGradient>
<filter id="sh" x="-30%" y="-30%" width="160%" height="160%"><feDropShadow dx="0" dy="1" stdDeviation="1.5" flood-color="#000" flood-opacity=".3"/></filter></defs>
<circle cx="25" cy="26" r="22.4" fill="#fff" filter="url(#sh)"/>
<path d="M32 4.5 C 27 10, 15 15, 8.5 27 C 3.5 37, 10 47.8, 24.5 47.8 C 37 47.5, 45.5 40, 45 27 C 44.5 17, 37.5 11, 32 4.5 Z" fill="url(#mg)"/>
<text x="12.6" y="30.5" font-family="Liberation Sans" font-size="10.6" fill="#e8f4fb" letter-spacing="-0.7">magic</text>
<circle cx="40.8" cy="10.2" r="7.9" fill="#cc0000"/>
<text x="40.8" y="13.6" text-anchor="middle" font-family="Liberation Sans" font-size="9.2" font-weight="bold" fill="#fff">59</text>
</svg>
</body></html>
